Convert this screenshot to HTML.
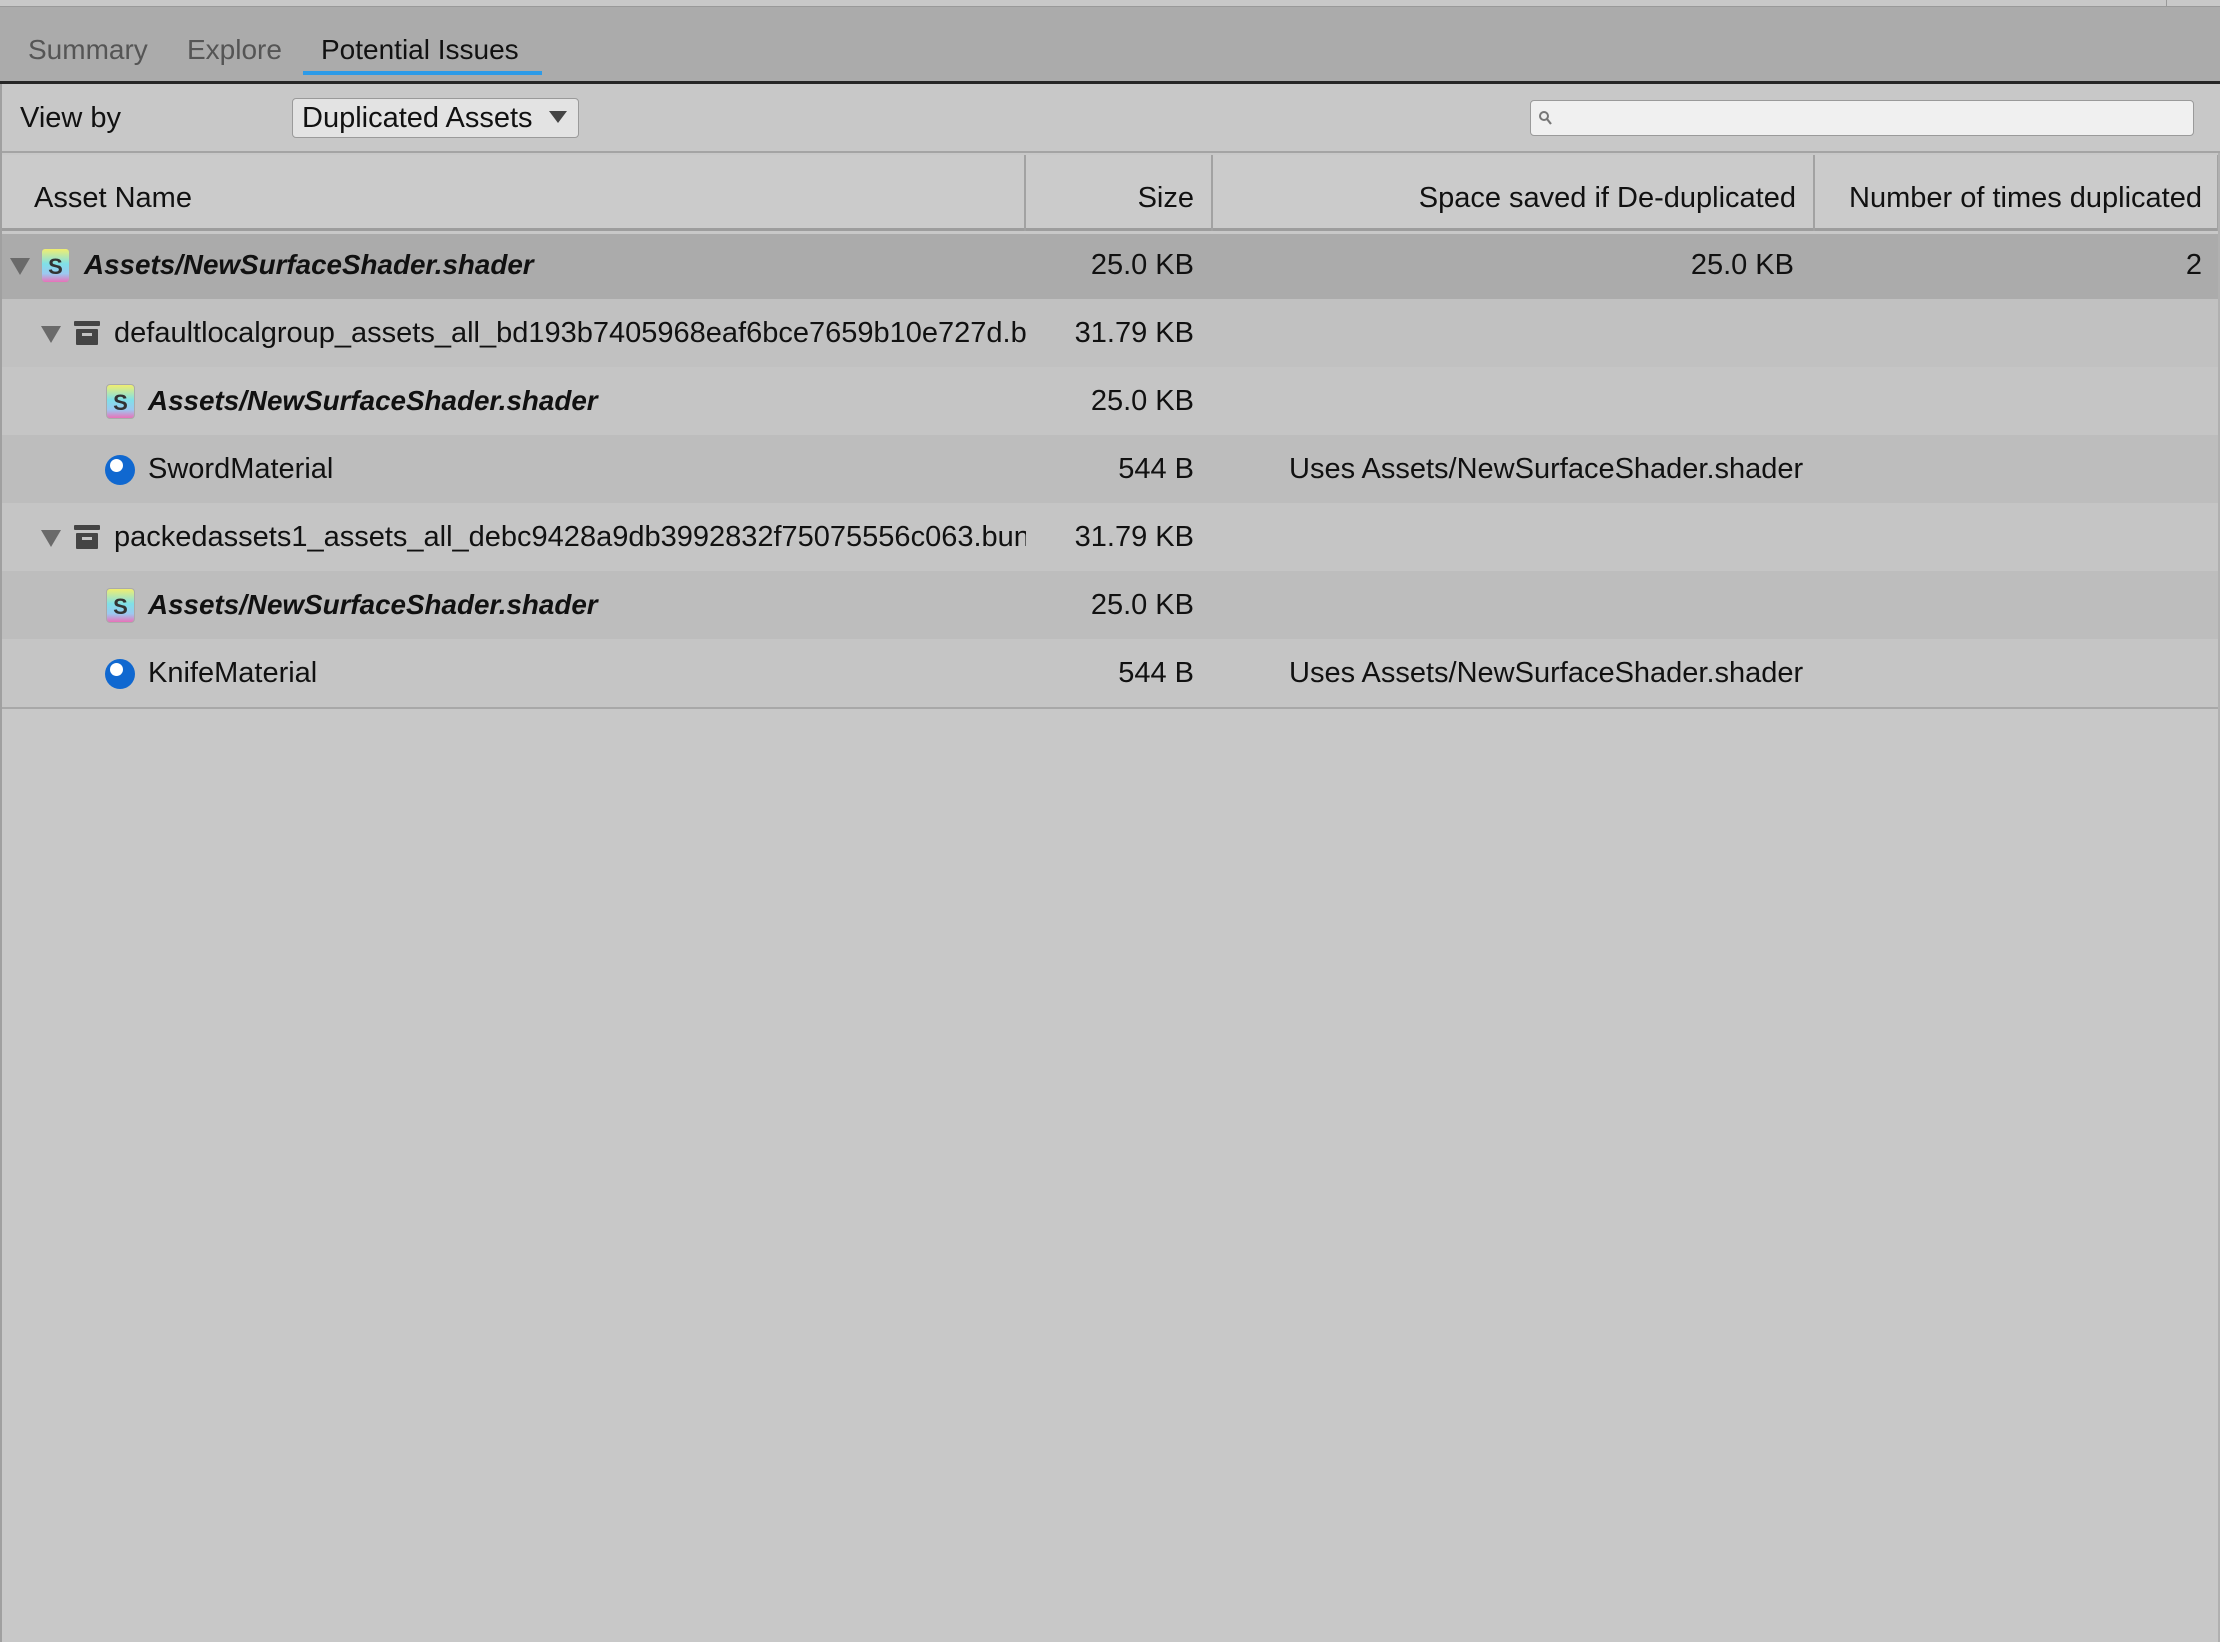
<!DOCTYPE html>
<html><head><meta charset="utf-8"><style>
*{margin:0;padding:0;box-sizing:border-box}
body{width:2220px;height:1642px;background:#c8c8c8;font-family:"Liberation Sans",sans-serif;color:#111;position:relative;overflow:hidden;font-size:29px}
.abs{position:absolute}
.tabbar{left:0;top:6px;width:2220px;height:76px;background:#ababab;border-top:1px solid #999}
.dark{left:0;top:81px;width:2220px;height:3px;background:#262626}
.tab{top:32px;font-size:28px;color:#555;line-height:36px}
.toolbar{left:0;top:84px;width:2220px;height:69px;background:#c8c8c8;border-bottom:2px solid #a4a4a4}
.hdr{left:0;top:155px;width:2220px;height:76px;background:#cbcbcb;border-bottom:3px solid #9d9d9d}
.vl{top:155px;width:2px;height:76px;background:#a2a2a2}
.ht{top:181px;line-height:34px}
.row{left:0;width:2218px;height:68px}
.t{line-height:34px;position:absolute;top:17px;white-space:nowrap}
.bi{font-weight:bold;font-style:italic;font-size:27.8px}
.r{text-align:right}
.tri{position:absolute;top:27px;width:0;height:0;border-left:10px solid transparent;border-right:10px solid transparent;border-top:17px solid #6a6a6a}
.sh{position:absolute;top:17px;width:29px;height:35px;border-radius:4px;background:linear-gradient(180deg,#f0ee70 0%,#7fe0e8 45%,#9cc8f0 75%,#e872b8 100%);border:1px solid #aaa;font:bold 22px "Liberation Sans",sans-serif;color:#333;text-align:center;line-height:36px}
.box{position:absolute;top:22px;width:26px;height:24px}
.mat{position:absolute;top:20px;width:30px;height:30px;border-radius:50%;background:#1068d0}
.mat:after{content:"";position:absolute;left:5px;top:4px;width:13px;height:13px;border-radius:50%;background:#fff}
</style></head><body>
<div class="abs" style="left:0;top:0;width:2220px;height:6px;background:#c8c8c8"></div>
<div class="abs" style="left:2166px;top:0;width:1px;height:6px;background:#999"></div>
<div class="abs tabbar"></div>
<div class="abs tab" style="left:28px">Summary</div>
<div class="abs tab" style="left:187px">Explore</div>
<div class="abs tab" style="left:321px;color:#111">Potential Issues</div>
<div class="abs" style="left:303px;top:71px;width:239px;height:4px;background:#2d9be8"></div>
<div class="abs dark"></div>
<div class="abs toolbar"></div>
<div class="abs" style="left:20px;top:101px;line-height:34px">View by</div>
<div class="abs" style="left:292px;top:98px;width:287px;height:40px;background:#e3e3e3;border:1px solid #9a9a9a;border-radius:4px"></div>
<div class="abs" style="left:302px;top:101px;line-height:34px">Duplicated Assets</div>
<div class="abs" style="left:549px;top:111px;width:0;height:0;border-left:9px solid transparent;border-right:9px solid transparent;border-top:12px solid #444"></div>
<div class="abs" style="left:1530px;top:100px;width:664px;height:36px;background:#f0f0f0;border:1px solid #9a9a9a;border-radius:4px"></div>
<svg class="abs" style="left:1538px;top:110px" width="16" height="18" viewBox="0 0 16 18"><circle cx="6" cy="6" r="4" fill="none" stroke="#777" stroke-width="2"/><path d="M9 9l4 5" stroke="#777" stroke-width="2.2"/></svg>
<div class="abs hdr"></div>
<div class="abs vl" style="left:1024px"></div>
<div class="abs vl" style="left:1211px"></div>
<div class="abs vl" style="left:1813px"></div>
<div class="abs vl" style="left:2217px"></div>
<div class="abs ht" style="left:34px">Asset Name</div>
<div class="abs ht r" style="right:1026px">Size</div>
<div class="abs ht r" style="right:424px">Space saved if De-duplicated</div>
<div class="abs ht r" style="right:18px">Number of times duplicated</div>

<div class="abs row" style="top:234px;height:65px;background:#ababab">
<div class="tri" style="left:10px;top:24px"></div><div class="sh" style="left:41px;top:14px">S</div>
<div class="t bi" style="left:84px;top:14px">Assets/NewSurfaceShader.shader</div>
<div class="t r" style="right:1024px;top:14px">25.0 KB</div>
<div class="t r" style="right:424px;top:14px">25.0 KB</div>
<div class="t r" style="right:16px;top:14px">2</div></div>

<div class="abs row" style="top:299px;background:#c1c1c1;overflow:hidden">
<div class="tri" style="left:41px"></div>
<svg class="box" style="left:74px" viewBox="0 0 26 24"><rect x="0" y="0" width="26" height="5" rx="1" fill="#444"/><rect x="2" y="8" width="22" height="16" rx="1" fill="#444"/><rect x="8" y="12" width="10" height="3" fill="#c1c1c1"/></svg>
<div class="t" style="left:114px;width:912px;overflow:hidden">defaultlocalgroup_assets_all_bd193b7405968eaf6bce7659b10e727d.bundle</div>
<div class="t r" style="right:1024px">31.79 KB</div></div>

<div class="abs row" style="top:367px;background:#c5c5c5">
<div class="sh" style="left:106px">S</div>
<div class="t bi" style="left:148px">Assets/NewSurfaceShader.shader</div>
<div class="t r" style="right:1024px">25.0 KB</div></div>

<div class="abs row" style="top:435px;background:#bdbdbd">
<div class="mat" style="left:105px"></div>
<div class="t" style="left:148px">SwordMaterial</div>
<div class="t r" style="right:1024px">544 B</div>
<div class="t" style="left:1289px">Uses Assets/NewSurfaceShader.shader</div></div>

<div class="abs row" style="top:503px;background:#c5c5c5;overflow:hidden">
<div class="tri" style="left:41px"></div>
<svg class="box" style="left:74px" viewBox="0 0 26 24"><rect x="0" y="0" width="26" height="5" rx="1" fill="#444"/><rect x="2" y="8" width="22" height="16" rx="1" fill="#444"/><rect x="8" y="12" width="10" height="3" fill="#c5c5c5"/></svg>
<div class="t" style="left:114px;width:912px;overflow:hidden">packedassets1_assets_all_debc9428a9db3992832f75075556c063.bundle</div>
<div class="t r" style="right:1024px">31.79 KB</div></div>

<div class="abs row" style="top:571px;background:#bdbdbd">
<div class="sh" style="left:106px">S</div>
<div class="t bi" style="left:148px">Assets/NewSurfaceShader.shader</div>
<div class="t r" style="right:1024px">25.0 KB</div></div>

<div class="abs row" style="top:639px;background:#c5c5c5">
<div class="mat" style="left:105px"></div>
<div class="t" style="left:148px">KnifeMaterial</div>
<div class="t r" style="right:1024px">544 B</div>
<div class="t" style="left:1289px">Uses Assets/NewSurfaceShader.shader</div></div>

<div class="abs" style="left:0;top:707px;width:2220px;height:2px;background:#a8a8a8"></div>
<div class="abs" style="left:0;top:84px;width:2px;height:1558px;background:#a0a0a0"></div>
<div class="abs" style="left:2218px;top:153px;width:2px;height:1489px;background:#b0b0b0"></div>
</body></html>
